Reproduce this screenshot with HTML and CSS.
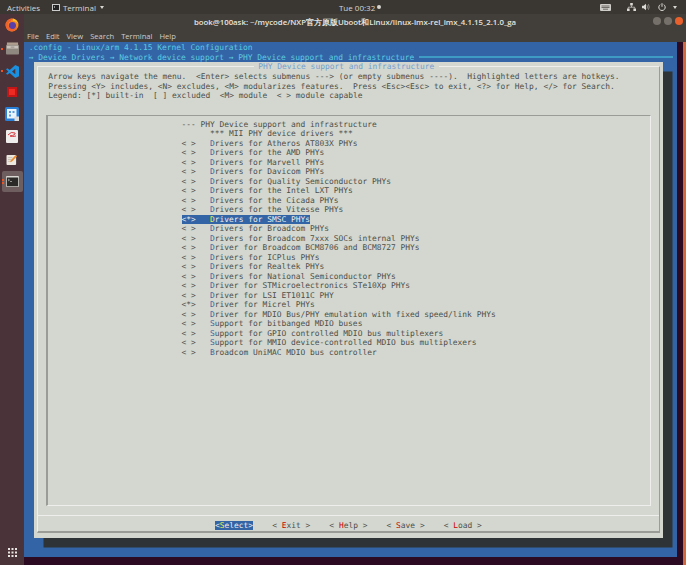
FILE: index.html
```html
<!DOCTYPE html>
<html>
<head>
    <title>Terminal - menuconfig</title>
    <link rel="stylesheet" href="styles.css">
</head>
<body>
    <div class="topbar">
        <span class="activities">Activities</span>
        <span class="app-menu">
            <svg class="app-icon" width="8" height="7" viewBox="0 0 8 7"><rect x="0.5" y="0.5" width="7" height="6" fill="#222" stroke="#ccc"/><path d="M2 2l1 1-1 1" stroke="#ddd" fill="none" stroke-width="0.6"/></svg>
            Terminal
            <span class="caret"></span>
        </span>
        <span class="clock">Tue 00:32 <span class="dot"></span></span>
        <span class="tray">
            <svg width="11" height="7" viewBox="0 0 11 7"><rect width="11" height="7" rx="1" fill="#cfcdc8"/><path d="M1.5 2h8M1.5 3.5h8M3 5.2h5" stroke="#45423d" stroke-width="0.7"/></svg>
            <svg class="tray-net" width="9" height="8" viewBox="0 0 9 8"><path d="M3.2 0h2.6v2.6H3.2zM0 5.4h2.6V8H0zM6.4 5.4H9V8H6.4z" fill="#dcdad5"/><path d="M4.5 2.6v1.6M1.3 5.4V4.2h6.4v1.2" stroke="#dcdad5" stroke-width="0.7" fill="none"/></svg>
            <svg class="tray-vol" width="8" height="8" viewBox="0 0 8 8"><path d="M0 2.8h1.6L4 .8v6.4L1.6 5.2H0z" fill="#dcdad5"/><path d="M5 2.2q1 1.8 0 3.6M6.4 1.2q1.6 2.8 0 5.6" stroke="#aaa8a3" stroke-width="0.7" fill="none"/></svg>
            <svg class="tray-power" width="8" height="8" viewBox="0 0 8 8"><path d="M2.3 1.6a3.2 3.2 0 1 0 3.4 0" stroke="#dcdad5" fill="none"/><path d="M4 .2v3.6" stroke="#dcdad5"/></svg>
            <span class="caret tray-caret"></span>
        </span>
    </div>

    <div class="main">
        <div class="dock">
            <svg class="dock-icon firefox" width="14" height="14" viewBox="0 0 14 14"><circle cx="7" cy="7" r="6.5" fill="#f58a1f"/><circle cx="7.4" cy="7.6" r="3.6" fill="#5b3fa8"/><path d="M1 5Q3 .5 8 .6 5.500 2 6 3.500 3 3.500 3.400 7 3.500 11 8 11 11 11 12 8 12 12.500 7 13.500 1 13 .6 7z" fill="#f0612c"/><path d="M8 .6q4.500 1 5.200 5.500Q11.500 3 8 3z" fill="#fbc02d"/></svg>
            <span class="running files-dot"></span>
            <svg class="dock-icon files" width="13" height="13" viewBox="0 0 14 13"><rect x="1" y="0" width="12" height="3" fill="#b09f8f"/><rect y="2.500" width="14" height="10.500" rx="1" fill="#8f8880"/><rect x="1" y="3.500" width="12" height="3" fill="#c9c3bb"/><rect x="5" y="4.500" width="4" height="1" fill="#8f8880"/></svg>
            <span class="running code-dot"></span>
            <svg class="dock-icon vscode" width="13" height="13" viewBox="0 0 14 14"><path d="M10 0l4 2v10l-4 2-6-5.500L1.500 10.500 0 9.500 2.500 7 0 4.500l1.500-1L4 5.500zM10 4L6.500 7 10 10z" fill="#1b8fe0"/></svg>
            <svg class="dock-icon red" width="10" height="10" viewBox="0 0 10 10"><rect width="10" height="10" fill="#c41616"/><rect x="2" y="2" width="6" height="6" fill="#ee2b22"/></svg>
            <svg class="dock-icon board" width="14" height="14" viewBox="0 0 14 14"><rect width="14" height="14" rx="1.500" fill="#2a7fd6"/><rect x="2" y="2" width="9.500" height="9.500" fill="#eaf2fb"/><path d="M4 4h2v2H4zM7.500 4h2v2h-2zM4 7.500h2v2H4z" fill="#5b9be0"/><rect x="9.500" y="9.500" width="4.500" height="4.500" fill="#ddd"/></svg>
            <svg class="dock-icon sketch" width="12" height="13" viewBox="0 0 12 13"><rect width="12" height="13" rx="1" fill="#efeeec"/><path d="M2 5q3-4 7-2 1 2-5 3 2 1 6 0" stroke="#d8343c" fill="none"/></svg>
            <svg class="dock-icon note" width="12" height="11" viewBox="0 0 12 12"><rect y="1" width="10.500" height="11" rx="1" fill="#ece8e0"/><path d="M1.500 4h5M1.500 6h4M1.500 8h3" stroke="#a9a49b" stroke-width="0.600"/><path d="M4 9l.5-2L10 1.200l1.500 1.300L6 8.300z" fill="#ee8a2a"/></svg>
            <div class="dock-active">
                <span class="running term-dot-a"></span>
                <span class="running term-dot-b"></span>
                <svg width="13" height="11" viewBox="0 0 13 11"><rect width="13" height="11" rx="1" fill="#d9d7d2"/><rect x="0.800" y="1.500" width="11.400" height="8.800" fill="#2b2a29"/><path d="M2 3l1.500 1L2 5M4 5.500h2" stroke="#ddd" stroke-width="0.600" fill="none"/></svg>
            </div>
            <svg class="dock-grid" width="9" height="9" viewBox="0 0 9 9" fill="#e8e6e2"><path d="M0 0h2v2H0zM3.500 0h2v2h-2zM7 0h2v2H7zM0 3.500h2v2H0zM3.500 3.500h2v2h-2zM7 3.500h2v2H7zM0 7h2v2H0zM3.500 7h2v2h-2zM7 7h2v2H7z"/></svg>
        </div>

        <div class="window">
            <div class="titlebar">
                <span class="title">book@100ask: ~/mycode/NXP官方原版Uboot和Linux/linux-imx-rel_imx_4.1.15_2.1.0_ga</span>
                <span class="win-buttons">
                    <span class="win-btn"></span>
                    <span class="win-btn"></span>
                    <span class="win-btn close"></span>
                </span>
            </div>
            <div class="menubar">
                <span>File</span><span>Edit</span><span>View</span><span>Search</span><span>Terminal</span><span>Help</span>
            </div>
            <div class="content">
                <div class="terminal">
                    <pre class="term-line config"> .config - Linux/arm 4.1.15 Kernel Configuration</pre>
                    <div class="crumbs">
                        <pre class="term-line config"> → Device Drivers → Network device support → PHY Device support and infrastructure </pre>
                        <span class="crumb-rule"></span>
                    </div>

                    <div class="dialog">
                        <div class="frame">
                            <pre class="dialog-title"> PHY Device support and infrastructure </pre>
                            <div class="help">
                                <pre>Arrow keys navigate the menu.  &lt;Enter&gt; selects submenus ---&gt; (or empty submenus ----).  Highlighted letters are hotkeys.</pre>
                                <pre>Pressing &lt;Y&gt; includes, &lt;N&gt; excludes, &lt;M&gt; modularizes features.  Press &lt;Esc&gt;&lt;Esc&gt; to exit, &lt;?&gt; for Help, &lt;/&gt; for Search.</pre>
                                <pre>Legend: [*] built-in  [ ] excluded  &lt;M&gt; module  &lt; &gt; module capable</pre>
                            </div>
                            <div class="listbox">
                                <pre>--- PHY Device support and infrastructure</pre>
                                <pre>      *** MII PHY device drivers ***</pre>
                                <pre>&lt; &gt;   <b>D</b>rivers for Atheros AT803X PHYs</pre>
                                <pre>&lt; &gt;   <b>D</b>rivers for the AMD PHYs</pre>
                                <pre>&lt; &gt;   <b>D</b>rivers for Marvell PHYs</pre>
                                <pre>&lt; &gt;   <b>D</b>rivers for Davicom PHYs</pre>
                                <pre>&lt; &gt;   <b>D</b>rivers for Quality Semiconductor PHYs</pre>
                                <pre>&lt; &gt;   <b>D</b>rivers for the Intel LXT PHYs</pre>
                                <pre>&lt; &gt;   <b>D</b>rivers for the Cicada PHYs</pre>
                                <pre>&lt; &gt;   <b>D</b>rivers for the Vitesse PHYs</pre>
                                <pre><span class="selected">&lt;*&gt;   <b>D</b>rivers for SMSC PHYs</span></pre>
                                <pre>&lt; &gt;   <b>D</b>rivers for Broadcom PHYs</pre>
                                <pre>&lt; &gt;   <b>D</b>rivers for Broadcom 7xxx SOCs internal PHYs</pre>
                                <pre>&lt; &gt;   <b>D</b>river for Broadcom BCM8706 and BCM8727 PHYs</pre>
                                <pre>&lt; &gt;   <b>D</b>rivers for ICPlus PHYs</pre>
                                <pre>&lt; &gt;   <b>D</b>rivers for Realtek PHYs</pre>
                                <pre>&lt; &gt;   <b>D</b>rivers for National Semiconductor PHYs</pre>
                                <pre>&lt; &gt;   <b>D</b>river for STMicroelectronics STe10Xp PHYs</pre>
                                <pre>&lt; &gt;   <b>D</b>river for LSI ET1011C PHY</pre>
                                <pre>&lt;*&gt;   <b>D</b>river for Micrel PHYs</pre>
                                <pre>&lt; &gt;   <b>D</b>river for MDIO Bus/PHY emulation with fixed speed/link PHYs</pre>
                                <pre>&lt; &gt;   <b>S</b>upport for bitbanged MDIO buses</pre>
                                <pre>&lt; &gt;   <b>S</b>upport for GPIO controlled MDIO bus multiplexers</pre>
                                <pre>&lt; &gt;   <b>S</b>upport for MMIO device-controlled MDIO bus multiplexers</pre>
                                <pre>&lt; &gt;   <b>B</b>roadcom UniMAC MDIO bus controller</pre>
                            </div>
                            <div class="buttons">
                                <pre class="btn active">&lt;<b>S</b>elect&gt;</pre>
                                <pre class="btn">&lt; <b>E</b>xit &gt;</pre>
                                <pre class="btn">&lt; <b>H</b>elp &gt;</pre>
                                <pre class="btn">&lt; <b>S</b>ave &gt;</pre>
                                <pre class="btn">&lt; <b>L</b>oad &gt;</pre>
                            </div>
                        </div>
                    </div>
                </div>
            </div>
        </div>
    </div>
</body>
</html>
```

FILE: styles.css
```css
html, body {
    margin: 0;
    height: 100%;
}
body {
    width: 686px;
    height: 565px;
    overflow: hidden;
    display: flex;
    flex-direction: column;
    background-color: #2c0a22;
    font-family: "Open Sans", "Noto Sans", sans-serif;
}
pre {
    margin: 0;
    font-family: "DejaVu Sans Mono", monospace;
    font-size: 7.92px;
    line-height: 9.53px;
    height: 9.53px;
    white-space: pre;
}

/* top bar */
.topbar {
    height: 14px;
    flex: none;
    display: flex;
    align-items: center;
    position: relative;
    background-color: #3a3733;
    color: #d8d6d1;
    font-size: 8px;
}
.activities {
    margin-left: 7px;
}
.app-menu {
    margin-left: 12px;
    display: flex;
    align-items: center;
    gap: 3px;
}
.caret {
    width: 0;
    height: 0;
    margin-left: 1px;
    border-left: 2.5px solid transparent;
    border-right: 2.5px solid transparent;
    border-top: 3px solid #d8d6d1;
}
.clock {
    margin-left: 235px;
    display: flex;
    align-items: center;
    gap: 2px;
}
.dot {
    width: 4px;
    height: 4px;
    border-radius: 50%;
    background-color: #d8d6d1;
}
.tray {
    margin-left: auto;
    margin-right: 9px;
    display: flex;
    align-items: center;
}
.tray-net {
    margin-left: 16px;
}
.tray-vol {
    margin-left: 6px;
}
.tray-power {
    margin-left: 8px;
}
.tray-caret {
    margin-left: 7px;
}

.main {
    flex: 1;
    display: flex;
    min-height: 0;
}

/* dock */
.dock {
    width: 24px;
    flex: none;
    display: flex;
    flex-direction: column;
    align-items: center;
    background-color: #4a3339;
    position: relative;
}
.dock-icon {
    flex: none;
    display: block;
}
.firefox { margin-top: 4px; }
.files { margin-top: 10px; }
.vscode { margin-top: 10px; }
.red { margin-top: 9px; }
.board { margin-top: 10px; }
.sketch { margin-top: 9px; }
.note { margin-top: 11px; }
.dock-active {
    width: 21px;
    height: 21px;
    margin-top: 6px;
    flex: none;
    display: flex;
    align-items: center;
    justify-content: center;
    border-radius: 2px;
    background-color: #6f5e60;
    position: relative;
}
.running {
    position: absolute;
    left: 1px;
    width: 2px;
    height: 2px;
    background-color: #e95420;
}
.files-dot { top: 34px; }
.code-dot { top: 56px; }
.term-dot-a { left: 0; top: 8px; }
.term-dot-b { left: 0; top: 11px; }
.dock-grid {
    margin-top: auto;
    margin-bottom: 8px;
}

/* window */
.window {
    flex: 1;
    display: flex;
    flex-direction: column;
    min-width: 0;
}
.titlebar {
    height: 16px;
    flex: none;
    display: flex;
    align-items: center;
    justify-content: center;
    position: relative;
    background-color: #423f3a;
    color: #e6e4df;
    font-size: 7.8px;
    font-weight: 600;
}
.win-buttons {
    position: absolute;
    right: 3px;
    top: 3px;
    display: flex;
    gap: 3px;
}
.win-btn {
    width: 8px;
    height: 8px;
    border-radius: 50%;
    background-color: #75716a;
}
.win-btn.close {
    background-color: #e9602c;
}
.menubar {
    height: 12px;
    flex: none;
    display: flex;
    align-items: center;
    gap: 7px;
    padding-left: 3px;
    background-color: #423f3a;
    color: #cfcdc8;
    font-size: 7.6px;
}
.content {
    flex: 1;
    min-height: 0;
    border-right: 3px solid #d2683e;
}

/* terminal */
.terminal {
    height: 515px;
    margin-right: 6px;
    padding-top: 1px;
    box-sizing: border-box;
    position: relative;
    background-color: #3364a5;
}
.config {
    color: #5ccbe0;
}
.crumbs {
    display: flex;
    align-items: center;
}
.crumb-rule {
    flex: 1;
    height: 2px;
    margin-right: 4px;
    background-color: #3e9cc4;
}

/* dialog */
.dialog {
    position: absolute;
    left: 9.5px;
    top: 20px;
    width: 629px;
    height: 476px;
    box-sizing: border-box;
    padding: 4px 3px 5px 3px;
    background-color: #d3d7cf;
    color: #4c4e4a;
    box-shadow: 9.5px 9.5px 0 #2e3436;
}
.frame {
    height: 100%;
    box-sizing: border-box;
    position: relative;
    padding-top: 5px;
    border: 1px solid #eeeeec;
    border-right-color: #9a9c97;
    border-bottom: 2px solid #9a9c97;
}
.dialog-title {
    position: absolute;
    left: 216px;
    top: -5px;
    background-color: #d3d7cf;
    color: #729fcf;
}
.help {
    padding-left: 10.85px;
}
.listbox {
    margin: 14px 8px 0 8px;
    height: 391px;
    box-sizing: border-box;
    padding: 4px 0 0 134px;
    border: 1px solid #eeeeec;
    border-top-color: #9a9c97;
    border-left: 2px solid #9a9c97;
}
.listbox b {
    font-weight: normal;
    color: #3465a4;
}
.selected {
    display: inline-block;
    background-color: #3364a5;
    color: #eeeeec;
}
.listbox .selected b {
    color: #fce94f;
}
.buttons {
    margin-top: 9px;
    padding-top: 5px;
    border-top: 1px solid #eeeeec;
    display: flex;
    gap: 19.08px;
    padding-left: 177.5px;
}
.btn b {
    font-weight: normal;
    color: #cc0000;
}
.btn.active {
    background-color: #3364a5;
    color: #eeeeec;
}
.btn.active b {
    color: #fce94f;
}
```
